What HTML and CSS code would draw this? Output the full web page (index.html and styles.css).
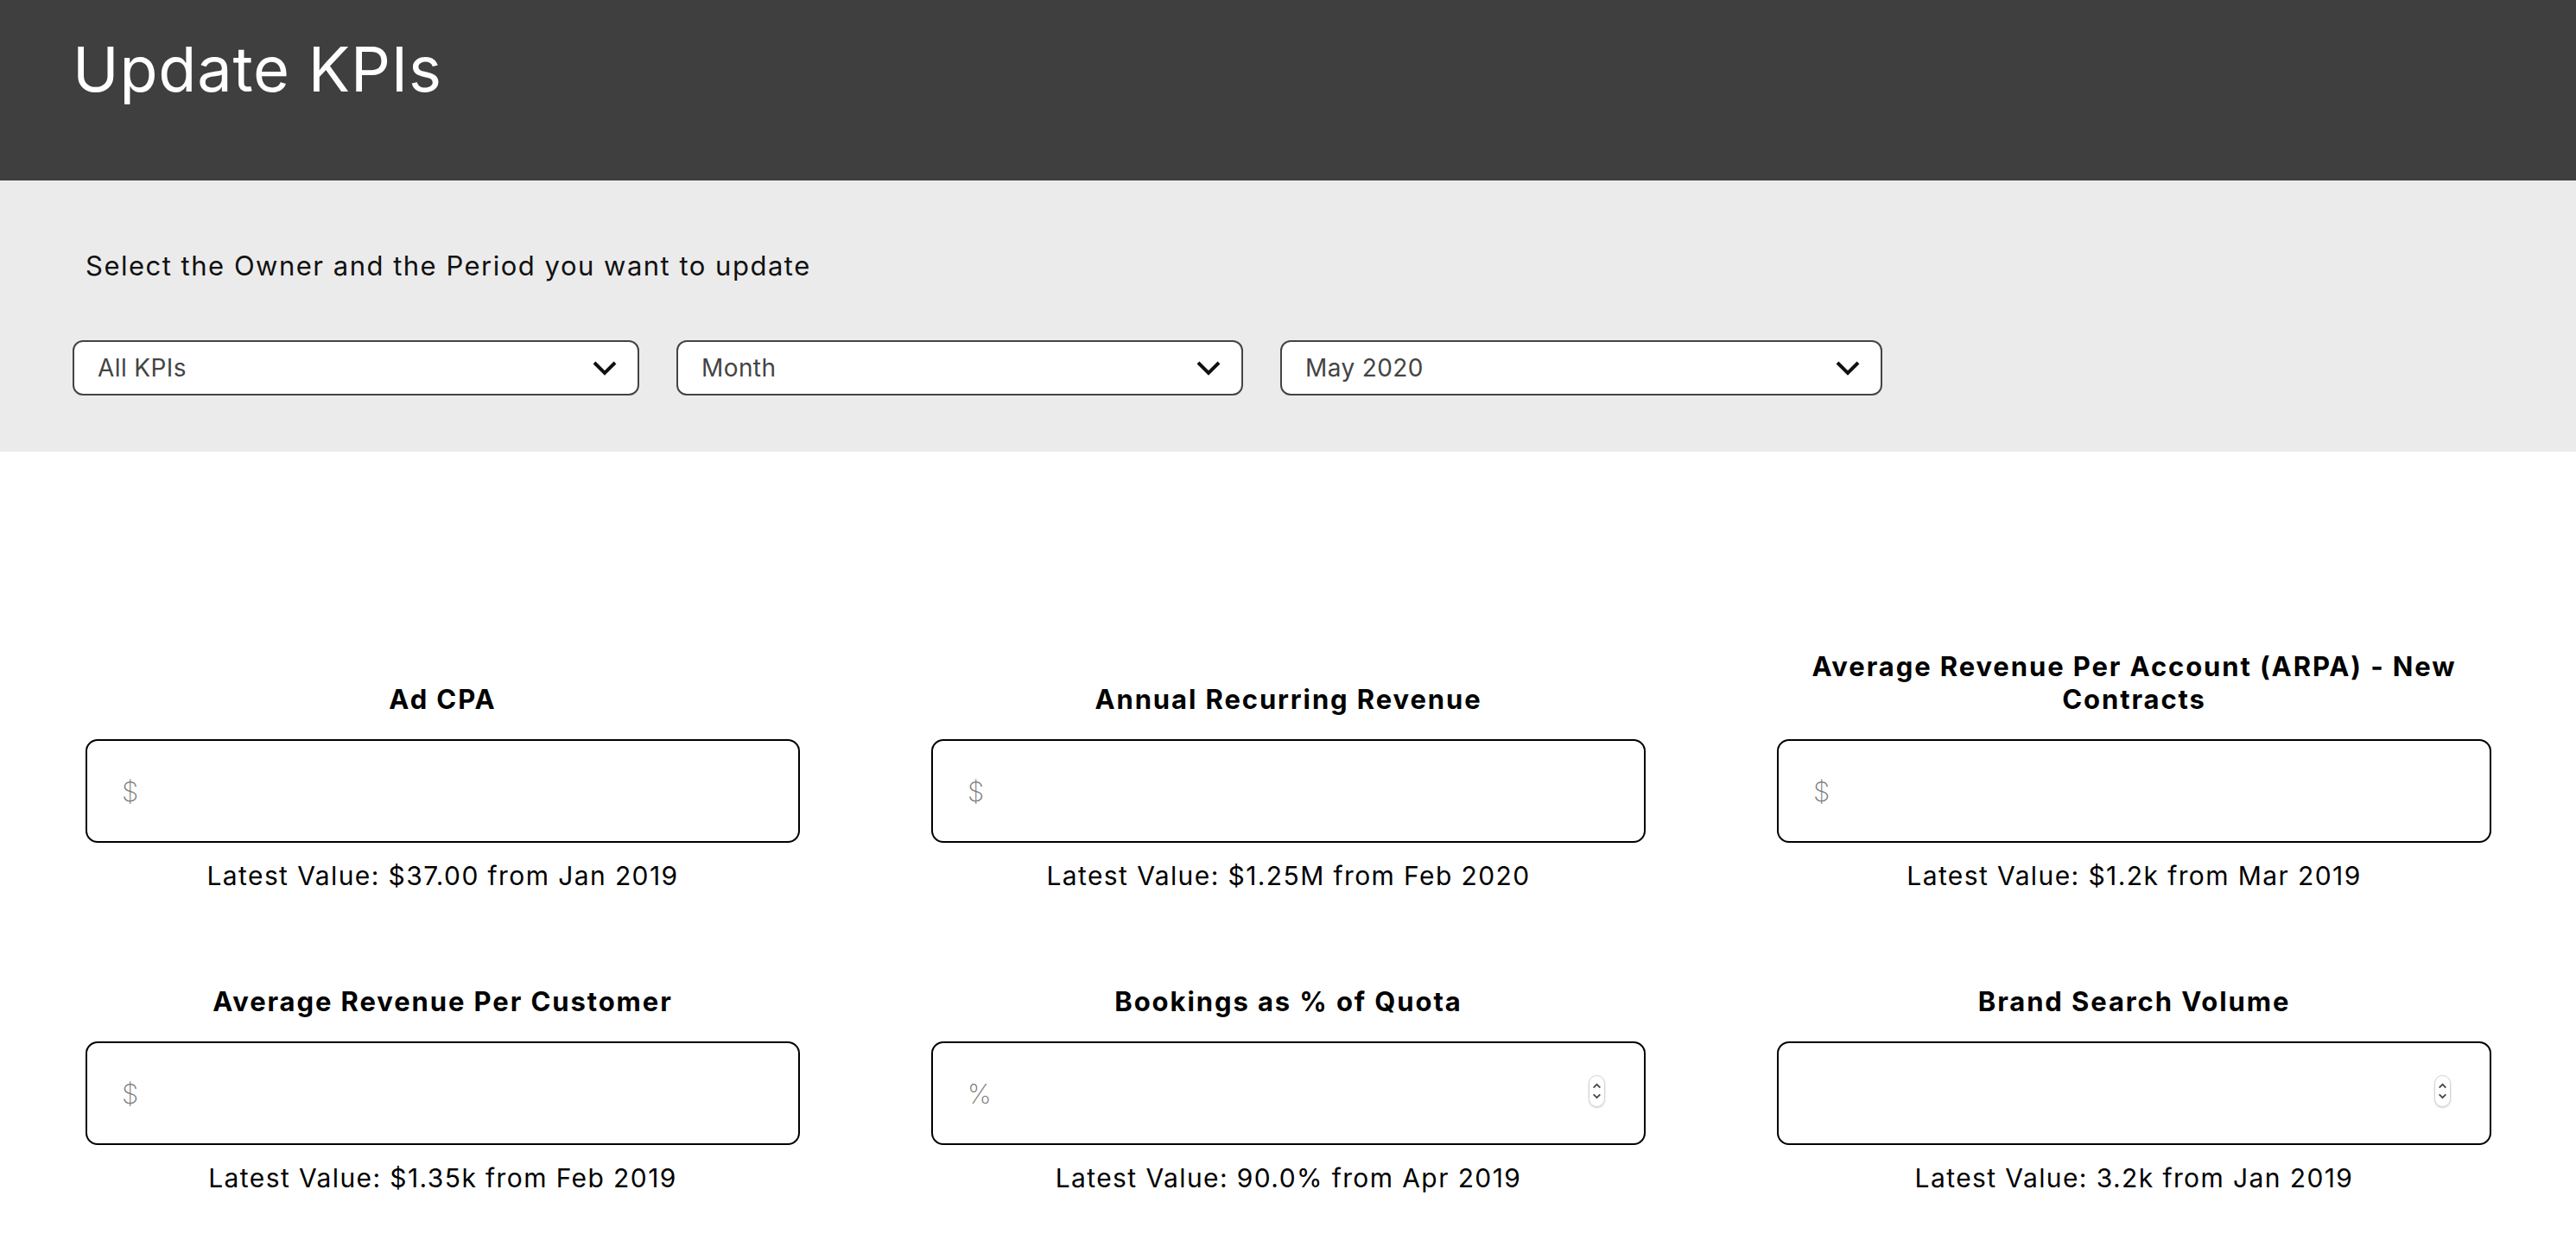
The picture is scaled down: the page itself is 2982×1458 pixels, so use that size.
FILE: index.html
```html
<!DOCTYPE html>
<html lang="en">
<head>
    <meta charset="UTF-8">
    <meta name="viewport" content="width=device-width, initial-scale=1.0">
    <title>Update KPIs</title>
    <link rel="stylesheet" href="styles.css">
</head>
<body>

    <header class="topbar">
        <h1>Update KPIs</h1>
    </header>

    <section class="filters">
        <p class="hint">Select the Owner and the Period you want to update</p>
        <div class="selects">
            <div class="select">
                <span>All KPIs</span>
                <svg class="chev" viewBox="0 0 28 17"><path d="M2 2 L14 14 L26 2" /></svg>
            </div>
            <div class="select">
                <span>Month</span>
                <svg class="chev" viewBox="0 0 28 17"><path d="M2 2 L14 14 L26 2" /></svg>
            </div>
            <div class="select wide">
                <span>May 2020</span>
                <svg class="chev" viewBox="0 0 28 17"><path d="M2 2 L14 14 L26 2" /></svg>
            </div>
        </div>
    </section>

    <main class="kpis">
        <div class="kpi">
            <div class="kpi_name">Ad CPA</div>
            <div class="field"><input type="text" class="kpi_input" placeholder="$"></div>
            <div class="latest">Latest Value: $37.00 from Jan 2019</div>
        </div>
        <div class="kpi">
            <div class="kpi_name">Annual Recurring Revenue</div>
            <div class="field"><input type="text" class="kpi_input" placeholder="$"></div>
            <div class="latest">Latest Value: $1.25M from Feb 2020</div>
        </div>
        <div class="kpi">
            <div class="kpi_name">Average Revenue Per Account (ARPA) - New Contracts</div>
            <div class="field"><input type="text" class="kpi_input" placeholder="$"></div>
            <div class="latest">Latest Value: $1.2k from Mar 2019</div>
        </div>
        <div class="kpi">
            <div class="kpi_name">Average Revenue Per Customer</div>
            <div class="field"><input type="text" class="kpi_input" placeholder="$"></div>
            <div class="latest">Latest Value: $1.35k from Feb 2019</div>
        </div>
        <div class="kpi">
            <div class="kpi_name">Bookings as % of Quota</div>
            <div class="field">
                <input type="text" class="kpi_input" placeholder="%">
                <span class="spin">
                    <svg viewBox="0 0 10 8"><path d="M1.5 6 L5 2.5 L8.5 6" /></svg>
                    <svg viewBox="0 0 10 8"><path d="M1.5 2 L5 5.5 L8.5 2" /></svg>
                </span>
            </div>
            <div class="latest">Latest Value: 90.0% from Apr 2019</div>
        </div>
        <div class="kpi">
            <div class="kpi_name">Brand Search Volume</div>
            <div class="field">
                <input type="text" class="kpi_input">
                <span class="spin">
                    <svg viewBox="0 0 10 8"><path d="M1.5 6 L5 2.5 L8.5 6" /></svg>
                    <svg viewBox="0 0 10 8"><path d="M1.5 2 L5 5.5 L8.5 2" /></svg>
                </span>
            </div>
            <div class="latest">Latest Value: 3.2k from Jan 2019</div>
        </div>
    </main>

</body>
</html>
```

FILE: styles.css
```css
body {
    margin: 0;
    font-family: "Inter", "Open Sans", sans-serif;
    color: #000;
    background: #fff;
}

.topbar {
    height: 209px;
    box-sizing: border-box;
    padding: 30px 84px 0;
    background-color: #3f3f3f;
}
.topbar h1 {
    margin: 0;
    color: #fff;
    font-size: 72px;
    font-weight: 400;
    line-height: 100px;
    letter-spacing: 0.8px;
}

.filters {
    height: 314px;
    box-sizing: border-box;
    padding: 79px 84px 0;
    background-color: #ebebeb;
}
.hint {
    margin: 0 0 0 15px;
    font-size: 31px;
    line-height: 40px;
    letter-spacing: 1.5px;
    color: #111;
}
.selects {
    display: flex;
    gap: 43px;
    margin-top: 66px;
}
.select {
    width: 656px;
    height: 64px;
    box-sizing: border-box;
    display: flex;
    align-items: center;
    justify-content: space-between;
    padding: 0 24px 0 27px;
    background: #fff;
    border: 2px solid #444;
    border-radius: 12px;
    color: #444;
    font-size: 28px;
    letter-spacing: 0.4px;
}
.select.wide {
    width: 697px;
}
.chev {
    width: 28px;
    height: 17px;
}
.chev path {
    fill: none;
    stroke: #111;
    stroke-width: 4;
}

.kpis {
    display: grid;
    grid-template-columns: repeat(3, 827px);
    column-gap: 152px;
    row-gap: 70px;
    padding: 230px 99px 0;
}
.kpi {
    display: flex;
    flex-direction: column;
}
.kpi_name {
    min-height: 76px;
    display: flex;
    align-items: flex-end;
    justify-content: center;
    padding: 0 30px;
    text-align: center;
    font-size: 31px;
    font-weight: 700;
    line-height: 38px;
    letter-spacing: 1.9px;
}
.field {
    position: relative;
    margin-top: 27px;
}
.kpi_input {
    display: block;
    width: 100%;
    height: 120px;
    box-sizing: border-box;
    padding: 0 40px;
    border: 2.5px solid #000;
    border-radius: 14px;
    font-family: inherit;
    font-size: 31px;
    font-weight: 300;
    outline: none;
}
.kpi_input::placeholder {
    color: #7a7a7a;
    font-weight: 200;
}
.spin {
    position: absolute;
    top: 39px;
    right: 47px;
    width: 19px;
    height: 37px;
    box-sizing: border-box;
    display: flex;
    flex-direction: column;
    align-items: center;
    justify-content: center;
    gap: 3px;
    border: 1px solid #d4d4d4;
    border-radius: 10px;
    box-shadow: 0 1px 2px rgba(0, 0, 0, 0.2);
}
.spin svg {
    width: 11px;
    height: 9px;
}
.spin path {
    fill: none;
    stroke: #444;
    stroke-width: 1.6;
}
.latest {
    margin-top: 19px;
    text-align: center;
    font-size: 30px;
    line-height: 38px;
    letter-spacing: 1.4px;
}
```
